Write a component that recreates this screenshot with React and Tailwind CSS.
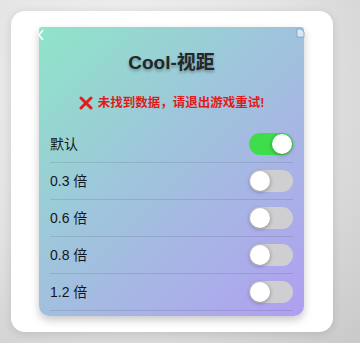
import React, { useState } from 'react'

const options = ['默认', '0.3 倍', '0.6 倍', '0.8 倍', '1.2 倍']

function Toggle({ on, onClick }) {
  return (
    <button
      type="button"
      onClick={onClick}
      className={`relative w-[44px] h-[22px] rounded-full transition-colors ${
        on ? 'bg-[#3fdc4c]' : 'bg-[#cfcfd1]'
      }`}
    >
      <span
        className={`absolute top-[1px] w-[20px] h-[20px] rounded-full bg-white shadow-[0_1px_4px_rgba(0,0,0,0.35)] transition-all ${
          on ? 'left-[23px]' : 'left-[1px]'
        }`}
      ></span>
    </button>
  )
}

export default function App() {
  const [selected, setSelected] = useState(0)

  return (
    <div className="w-[360px] h-[343px] overflow-hidden bg-[radial-gradient(ellipse_at_35%_25%,#f2f2f2_0%,#e2e2e2_55%,#c9c9c9_100%)] pt-[11px] pl-[11px] font-['Liberation_Sans','Noto_Sans_CJK_SC',sans-serif]">
      <div className="w-[322px] h-[321px] bg-white rounded-[14px] shadow-[0_2px_10px_rgba(0,0,0,0.12)] pl-[28px] pt-[16px]">
        <div className="relative w-[265px] h-[289px] rounded-t-[3px] rounded-b-[10px] bg-[linear-gradient(135deg,#8ee5c9_0%,#9fc4dc_45%,#aab0e8_75%,#b09ef2_100%)] shadow-[0_4px_8px_rgba(0,0,0,0.22)]">
          {/* back chevron, cut at the corner */}
          <svg className="absolute left-[-2px] top-[2px]" width="8" height="12" viewBox="0 0 8 12">
            <path d="M6 1 L2 6 L6 11" stroke="#ffffff" strokeWidth="1.6" fill="none" />
          </svg>
          {/* small doc icon at top right */}
          <svg className="absolute right-[-1px] top-[1px]" width="9" height="10" viewBox="0 0 9 10">
            <path d="M1 1 H5 L8 4 V9 H1 Z" fill="#dbe7f3" stroke="#7f9fc0" strokeWidth="0.8" />
          </svg>

          <h1 className="pt-[24px] text-center text-[19px] leading-[24px] font-bold text-[#23272a] [text-shadow:0_2px_3px_rgba(0,0,0,0.3)]">
            Cool-视距
          </h1>

          <div className="mt-[20px] flex items-center justify-center gap-[5px] h-[16px]">
            <svg width="14" height="14" viewBox="0 0 14 14">
              <path d="M2 2 L12 12 M12 2 L2 12" stroke="#e41c1c" strokeWidth="3" strokeLinecap="round" />
            </svg>
            <span className="text-[12.5px] leading-[16px] font-bold text-[#e01b1b]">
              未找到数据，请退出游戏重试!
            </span>
          </div>

          <div className="mt-[15px] px-[11px]">
            {options.map((label, i) => (
              <div
                key={label}
                className="h-[37px] flex items-center justify-between border-b border-black/10"
              >
                <span className="text-[14px] text-[#15171a]">{label}</span>
                <Toggle on={selected === i} onClick={() => setSelected(i)} />
              </div>
            ))}
          </div>
        </div>
      </div>
    </div>
  )
}
